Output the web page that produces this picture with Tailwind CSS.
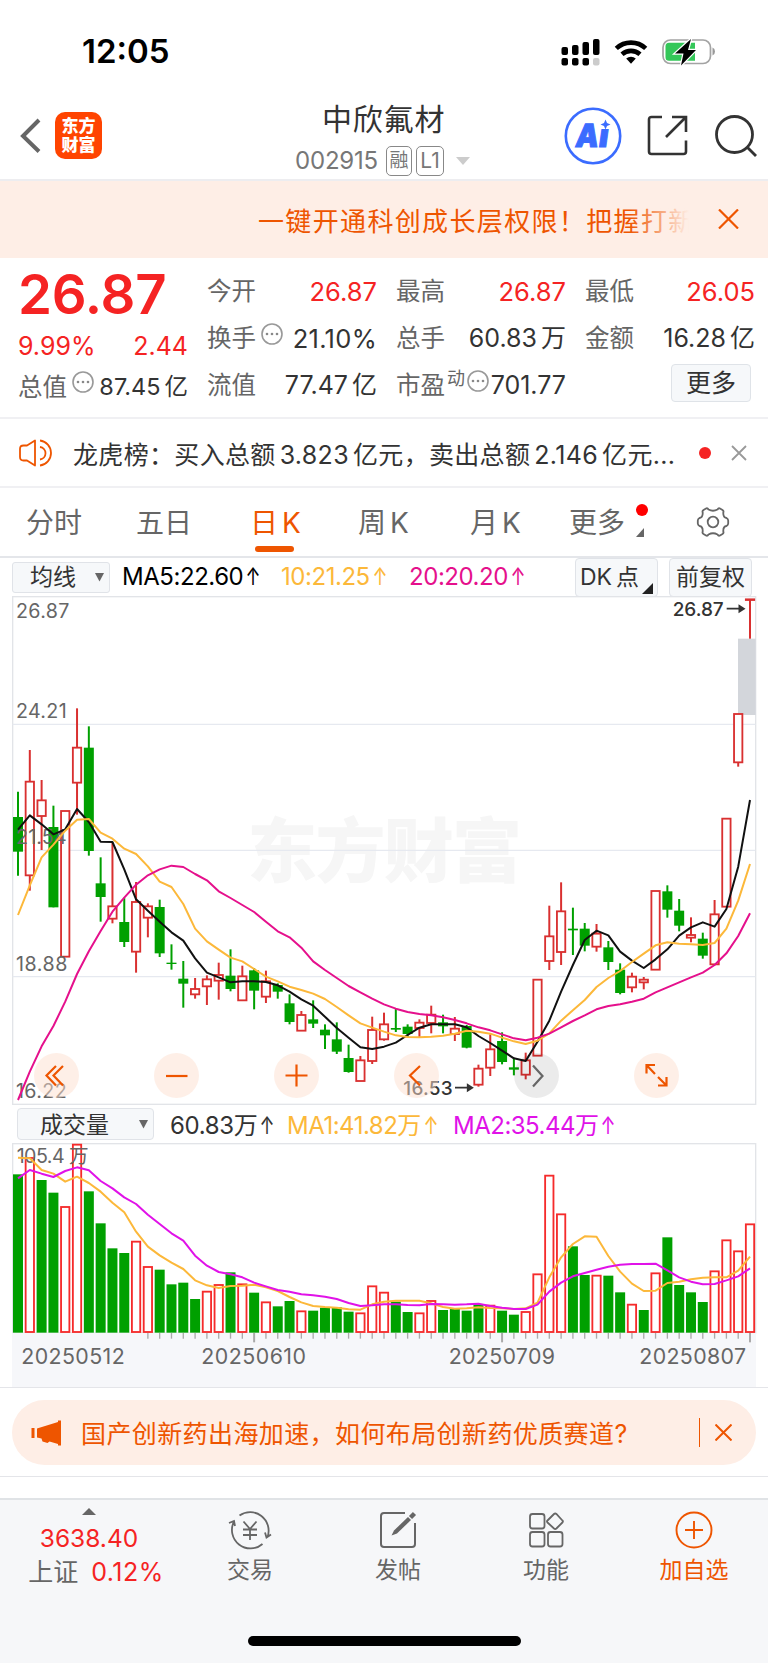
<!DOCTYPE html>
<html lang="zh-CN">
  <head>
    <meta charset="UTF-8" />
    <meta name="viewport" content="width=device-width, initial-scale=1" />
    <title>中欣氟材 002915</title>
    <script src="https://cdn.jsdelivr.net/npm/@tailwindcss/browser@4"></script>
  </head>
  <body class="bg-white">
    <div
      class="w-[768px] h-[1663px] overflow-hidden flex flex-col font-['Inter','Noto_Sans_CJK_SC',sans-serif] text-[#333] whitespace-nowrap"
    >
      <!-- Status bar -->
      <div class="h-[96px] shrink-0 flex justify-between items-center pt-[7px] pl-[82px] pr-[50px]">
        <div class="text-[33px] leading-none font-semibold text-black">12:05</div>
        <svg width="157" height="30" viewBox="0 0 157 30">
          <g fill="#000">
            <rect x="0.5" y="10" width="6.5" height="8" rx="2" />
            <rect x="11" y="8" width="6.5" height="10" rx="2" />
            <rect x="21.5" y="5" width="6.5" height="13" rx="2" />
            <rect x="32" y="2" width="6.5" height="16" rx="2" />
            <rect x="0.5" y="21" width="6.5" height="7.5" rx="2" />
            <rect x="11" y="21" width="6.5" height="7.5" rx="2" />
            <rect x="21.5" y="21" width="6.5" height="7.5" rx="2" />
            <rect x="32" y="21" width="6.5" height="7.5" rx="2" fill="#ccc" />
          </g>
          <g fill="none" stroke="#000" stroke-width="4.6">
            <path d="M55.3 11.4a21.5 21.5 0 0 1 29.4 0" />
            <path d="M61 17.3a13.6 13.6 0 0 1 18 0" />
          </g>
          <path d="M65.2 21.6a7.5 7.5 0 0 1 9.6 0l-4.800 5.100z" fill="#000" />
          <rect x="102" y="3" width="47.5" height="23.5" rx="7.5" fill="none" stroke="#a3a3a3" stroke-width="1.7" />
          <path d="M151.5 10.5q2.5 1 2.5 4t-2.5 4z" fill="#999" />
          <path d="M108 5.7h26v18h-26q-3.5 0-3.5-3.5v-11q0-3.5 3.5-3.5z" fill="#34c759" />
          <path d="M130 2l-16 14.5h8.5L120 28.5l15-15.5h-8z" fill="#000" stroke="#fff" stroke-width="2.4" paint-order="stroke" />
        </svg>
      </div>

      <!-- Title bar -->
      <div class="h-[85px] shrink-0 flex justify-between items-center pl-[20px] pr-[11px] pb-[4px] border-b-2 border-[#ededf0] relative">
        <div class="flex items-center gap-[14px]">
          <svg width="21" height="36" viewBox="0 0 21 36" fill="none" stroke="#666" stroke-width="4">
            <path d="M19 2L3 18l16 15.5" />
          </svg>
          <div
            class="w-[47px] h-[47px] rounded-[10px] bg-[#ff4400] text-white text-[17px] leading-[19px] font-black flex items-center justify-center text-center"
          >
            东方<br />财富
          </div>
        </div>
        <div class="absolute left-[295px] top-[5px] w-[176px]">
          <div class="text-[30px] leading-[36px] pl-[27px] tracking-[0.8px]">中欣氟材</div>
          <div class="flex items-center h-[30px] mt-[9px]">
            <span class="text-[24px] text-[#777] leading-none w-[91px] tracking-[-0.2px]">002915</span>
            <span class="w-[26px] h-[30px] rounded-[5px] border-[1.5px] border-[#888] text-[#777] text-[19px] leading-[28px] text-center">融</span>
            <span class="w-[28px] h-[30px] ml-[4px] rounded-[5px] border-[1.5px] border-[#888] text-[#777] text-[21px] leading-[28px] text-center">L1</span>
            <svg class="ml-[12px]" width="14" height="8" viewBox="0 0 14 8"><path d="M0 0h14L7 8z" fill="#ccc" /></svg>
          </div>
        </div>
        <div class="flex items-center">
          <svg width="58" height="58" viewBox="0 0 58 58">
            <circle cx="29" cy="29" r="27.2" fill="none" stroke="#3b6cff" stroke-width="2.6" />
            <g transform="skewX(-8)" font-size="32" font-weight="900" fill="#3b6cff" stroke="#3b6cff" stroke-width="1">
              <text x="16" y="40" textLength="23" lengthAdjust="spacingAndGlyphs">A</text>
              <text x="39.5" y="40">ı</text>
            </g>
            <path d="M41.500 12.500l1.500 3.500 3.500 1.500-3.500 1.500-1.500 3.500-1.500-3.500-3.500-1.500 3.500-1.500z" fill="#3b6cff" />
          </svg>
          <svg class="ml-[25px]" width="41" height="41" viewBox="0 0 41 41" fill="none" stroke="#333" stroke-width="2.6">
            <path d="M15 2H4.5Q2 2 2 4.5v32Q2 39 4.5 39h32q2.5 0 2.5-2.5V25.5M25 2h14v15M39 2L19 22" />
          </svg>
          <svg class="ml-[27px]" width="42" height="42" viewBox="0 0 42 42" fill="none" stroke="#333" stroke-width="2.8">
            <circle cx="19.5" cy="19.5" r="18" />
            <path d="M32 32l9 9" />
          </svg>
        </div>
      </div>

      <!-- Scrolling promo -->
      <div class="h-[77px] shrink-0 bg-[#feeee6] flex items-center pl-[258px] pr-[29px] text-[#ee5500]">
        <div class="text-[26px] tracking-[1.35px] w-[431px] mt-[3px] overflow-hidden relative">
          一键开通科创成长层权限！把握打新
          <div class="absolute right-0 inset-y-0 w-[60px] bg-linear-to-r from-[#feeee6]/0 to-[#feeee6]"></div>
        </div>
        <svg class="ml-auto mb-[1px]" width="21" height="20" viewBox="0 0 21 20" fill="none" stroke="#ee5500" stroke-width="2.2">
          <path d="M1 .5l19 19M20 .5l-19 19" />
        </svg>
      </div>

      <!-- Quote -->
      <div class="h-[161px] shrink-0 grid grid-cols-[170px_170px_170px_170px] gap-x-[19px] pl-[18px] border-b-2 border-[#f0f0f3] text-[25.5px] leading-none">
        <div>
          <div class="text-[54.5px] font-semibold text-[#f52323] h-[71px] leading-[73px] tracking-[-0.2px]">26.87</div>
          <div class="flex justify-between items-center h-[34px] text-[#f52323] text-[25px]">
            <span>9.99%</span><span>2.44</span>
          </div>
          <div class="flex justify-between items-center h-[46px] mt-[1px]">
            <span class="text-[#666] text-[24.5px]">总值</span>
            <svg class="mb-[10px]" width="22" height="22" viewBox="0 0 22 22">
              <circle cx="11" cy="11" r="10" fill="none" stroke="#999" stroke-width="1.6" />
              <g fill="#888"><circle cx="6" cy="11" r="1.3" /><circle cx="11" cy="11" r="1.3" /><circle cx="16" cy="11" r="1.3" /></g>
            </svg>
            <span class="text-[23.5px]">87.45<span class="ml-1">亿</span></span>
          </div>
        </div>
        <div class="pt-[10px]">
          <div class="flex justify-between items-center h-[47px]">
            <span class="text-[#666] text-[24.5px]">今开</span><span class="text-[#f52323]">26.87</span>
          </div>
          <div class="flex items-center h-[47px]">
            <span class="text-[#666] text-[24.5px]">换手</span>
            <svg class="mb-[10px] ml-[5px] mr-auto" width="22" height="22" viewBox="0 0 22 22">
              <circle cx="11" cy="11" r="10" fill="none" stroke="#999" stroke-width="1.6" />
              <g fill="#888"><circle cx="6" cy="11" r="1.3" /><circle cx="11" cy="11" r="1.3" /><circle cx="16" cy="11" r="1.3" /></g>
            </svg>
            <span class="tracking-[0.3px]">21.10%</span>
          </div>
          <div class="flex justify-between items-center h-[47px]">
            <span class="text-[#666] text-[24.5px]">流值</span><span class="text-[25px]">77.47<span class="ml-1">亿</span></span>
          </div>
        </div>
        <div class="pt-[10px]">
          <div class="flex justify-between items-center h-[47px]">
            <span class="text-[#666] text-[24.5px]">最高</span><span class="text-[#f52323]">26.87</span>
          </div>
          <div class="flex justify-between items-center h-[47px]">
            <span class="text-[#666] text-[24.5px]">总手</span><span class="text-[25px]">60.83<span class="ml-1">万</span></span>
          </div>
          <div class="flex justify-between items-center h-[47px]">
            <span class="text-[#666] text-[24.5px]">市盈</span>
            <span class="text-[#666] text-[18px] mb-[14px]">动</span>
            <svg class="mb-[10px]" width="22" height="22" viewBox="0 0 22 22">
              <circle cx="11" cy="11" r="10" fill="none" stroke="#999" stroke-width="1.6" />
              <g fill="#888"><circle cx="6" cy="11" r="1.3" /><circle cx="11" cy="11" r="1.3" /><circle cx="16" cy="11" r="1.3" /></g>
            </svg>
            <span class="text-[25px]">701.77</span>
          </div>
        </div>
        <div class="pt-[10px]">
          <div class="flex justify-between items-center h-[47px]">
            <span class="text-[#666] text-[24.5px]">最低</span><span class="text-[#f52323]">26.05</span>
          </div>
          <div class="flex justify-between items-center h-[47px]">
            <span class="text-[#666] text-[24.5px]">金额</span><span class="text-[25px]">16.28<span class="ml-1">亿</span></span>
          </div>
          <div class="w-[80px] h-[38px] mt-[2px] ml-[86px] rounded-[4px] border-[1.5px] border-[#dfe3e8] bg-[#f6f8fa] text-[25px] leading-[37px] text-center">更多</div>
        </div>
      </div>

      <!-- News -->
      <div class="h-[69px] shrink-0 flex items-center pl-[19px] pr-[21px] border-b-2 border-[#f0f0f3]">
        <svg width="34" height="28" viewBox="0 0 34 28" fill="none" stroke="#ee5500" stroke-width="1.8">
          <path d="M16 1.5v25L8 21.5H4.5Q1 21.5 1 18v-8q0-3.5 3.5-3.5H8z" stroke-linejoin="round" />
          <path d="M21 8a6.3 6.3 0 0 1 0 12.5M21 1.5a12.6 12.6 0 0 1 0 25" />
        </svg>
        <div class="ml-[20px] mt-[6px] text-[25px] tracking-[0.33px] w-[604px]">龙虎榜：买入总额<span class="ml-1">3.823</span><span class="ml-1">亿元，卖出总额</span><span class="ml-1">2.146</span><span class="ml-1">亿元...</span></div>
        <div class="w-[12px] h-[12px] rounded-full bg-[#f52323] ml-[22px]"></div>
        <svg class="ml-auto" width="16" height="16" viewBox="0 0 16 16" fill="none" stroke="#999" stroke-width="1.8">
          <path d="M1 1l14 14M15 1L1 15" />
        </svg>
      </div>

      <!-- Period tabs -->
      <div
        class="h-[70px] shrink-0 grid grid-cols-[110px_114px_108px_112px_99px_127px_1fr] items-center pl-[26px] border-b-2 border-[#e4e6ea] text-[28px] leading-none text-[#666]"
      >
        <span class="pt-[2px]">分时</span>
        <span class="pt-[2px]">五日</span>
        <span class="pt-[2px] text-[#ee5500] relative"
          >日<span class="ml-1">K</span>
          <span class="absolute left-[5px] top-[39px] w-[39px] h-[6px] rounded-full bg-[#ee5500]"></span>
        </span>
        <span class="pt-[2px]">周<span class="ml-1">K</span></span>
        <span class="pt-[2px]">月<span class="ml-1">K</span></span>
        <span class="pt-[2px] relative"
          >更多
          <span class="absolute left-[67px] top-[-3px] w-[12px] h-[12px] rounded-full bg-[#ff0000]"></span>
          <svg class="absolute left-[67px] top-[21px]" width="8" height="9" viewBox="0 0 8 9"><path d="M8 0v9H0z" fill="#666" /></svg>
        </span>
        <svg width="34" height="32" viewBox="-17 -16 34 32" fill="none" stroke="#666" stroke-width="1.8" stroke-linejoin="round">
          <circle r="5.3" />
          <path
            d="M-4.500-12.500Q0-10 4.500-12.500 5.500-14.300 7-13.500L9.500-12Q11-11 10.300-9.500 10-4.500 13.500-4 15.200-3 15.200-1.500V1.500Q15.200 3 13.500 4 10 4.500 10.300 9.500 11 11 9.500 12L7 13.500Q5.500 14.300 4.500 12.500 0 10-4.500 12.500-5.500 14.300-7 13.500L-9.500 12Q-11 11-10.300 9.500-10 4.500-13.500 4-15.200 3-15.200 1.500V-1.500Q-15.200-3-13.500-4-10-4.500-10.300-9.500-11-11-9.500-12L-7-13.500Q-5.500-14.300-4.500-12.500z"
          />
        </svg>
      </div>

      <!-- Moving averages -->
      <div class="h-[38px] shrink-0 flex items-center pl-[12px] text-[24px] leading-none">
        <div class="w-[98px] h-[31px] rounded-[3px] border-[1.5px] border-[#e0e3e8] bg-[#f6f8fa] flex items-center pl-[17px]">
          <span class="text-[23px] pt-[1px]">均线</span>
          <svg class="ml-[19px]" width="9" height="9" viewBox="0 0 9 9"><path d="M0 0h9L4.5 8.5z" fill="#666" /></svg>
        </div>
        <span class="ml-[12px] w-[159px] text-black tracking-[-0.45px]">MA5:22.60<span class="inline-block scale-x-75">↑</span></span>
        <span class="w-[128px] text-[#fcb83a] tracking-[-0.45px]">10:21.25<span class="inline-block scale-x-75">↑</span></span>
        <span class="w-[166px] text-[#e5108c] tracking-[-0.45px]">20:20.20<span class="inline-block scale-x-75">↑</span></span>
        <div class="w-[83px] h-[39px] rounded-[4px] border-[1.5px] border-[#e0e3e8] bg-[#f6f8fa] flex items-center pl-[4px] relative text-[23px]">
          DK<span class="ml-1">点</span>
          <svg class="absolute right-[4px] bottom-[2px]" width="11" height="11" viewBox="0 0 11 11"><path d="M11 0v11H0z" fill="#222" /></svg>
        </div>
        <div class="w-[83px] h-[39px] ml-[11px] pt-[1px] rounded-[4px] border-[1.5px] border-[#e0e3e8] bg-[#f6f8fa] flex items-center justify-center text-[23px]">前复权</div>
      </div>

      <!-- Candles: three chart units to the pixel -->
      <div class="h-[509px] shrink-0 relative">
        <svg class="block" width="768" height="509" viewBox="0 -432 2304 1527">
          <rect x="38" y="-430" width="2229" height="1523" fill="none" stroke="#e2e4e8" stroke-width="4" />
          <text x="742" y="412" font-size="210" font-weight="900" fill="#f6f6f6" textLength="824">东方财富</text>
          <path d="M38-47H2266M38 331H2266M38 710H2266" stroke="#e6e9f0" stroke-width="4" />
          <rect x="2214" y="-304" width="53" height="229" fill="#d3d6db" />
          <g id="candles"></g>
          <g fill="#666" font-size="59">
            <text x="48" y="-366" textLength="160">26.87</text>
            <text x="48" y="-67" textLength="152">24.21</text>
            <text x="48" y="312" textLength="152">21.54</text>
            <text x="48" y="692" textLength="154">18.88</text>
            <text x="48" y="1073" textLength="152">16.22</text>
          </g>
          <g id="maLines" fill="none" stroke-width="6" stroke-linejoin="round"></g>
          <g fill="#333" font-size="57" font-weight="500">
            <text x="2018" y="-373" textLength="153">26.87</text>
            <text x="1210" y="1065" textLength="148">16.53</text>
          </g>
          <g fill="#333" stroke="#333" stroke-width="5">
            <path d="M2180-394h38v-9l14 9-14 9v-9M1365 1043h38v-9l14 9-14 9v-9" />
          </g>
        </svg>
        <div class="absolute left-[34px] top-[457px] w-[645px] flex justify-between">
          <svg width="45" height="45" viewBox="0 0 45 45" fill="none" stroke="#ee5500" stroke-width="2.2">
            <circle cx="22.5" cy="22.5" r="22.5" fill="#fee0d0" fill-opacity=".5" stroke="none" />
            <path d="M22 13L12.5 22.5 22 32.5M29 13l-9.5 9.5L29 32.5" />
          </svg>
          <svg width="45" height="45" viewBox="0 0 45 45" fill="none" stroke="#ee5500" stroke-width="2.2">
            <circle cx="22.5" cy="22.5" r="22.5" fill="#fee0d0" fill-opacity=".5" stroke="none" />
            <path d="M12 23h21.5" />
          </svg>
          <svg width="45" height="45" viewBox="0 0 45 45" fill="none" stroke="#ee5500" stroke-width="2.2">
            <circle cx="22.5" cy="22.5" r="22.5" fill="#fee0d0" fill-opacity=".5" stroke="none" />
            <path d="M11.5 22.5h22M22.5 11.5v22" />
          </svg>
          <svg width="45" height="45" viewBox="0 0 45 45" fill="none" stroke="#ee5500" stroke-width="2.2">
            <circle cx="22.5" cy="22.5" r="22.5" fill="#fee0d0" fill-opacity=".5" stroke="none" />
            <path d="M26 13L16 22.5 26 32.5" />
          </svg>
          <svg width="45" height="45" viewBox="0 0 45 45" fill="none" stroke="#666" stroke-width="2.2">
            <circle cx="22.5" cy="22.5" r="22.5" fill="#000" fill-opacity=".08" stroke="none" />
            <path d="M19 12.5l9.5 10.5L19 33.5" />
          </svg>
          <svg width="45" height="45" viewBox="0 0 45 45" fill="none" stroke="#ee5500" stroke-width="2.2">
            <circle cx="22.5" cy="22.5" r="22.5" fill="#fee0d0" fill-opacity=".5" stroke="none" />
            <path d="M21 12h-8.5v8.5M12.5 12l8.5 9M24 24l8.5 8.5M24 32.5h8.5V24" />
          </svg>
        </div>
      </div>

      <!-- Volume header -->
      <div class="h-[38px] shrink-0 flex items-center pl-[17px] text-[24px] leading-none">
        <div class="w-[137px] h-[32px] rounded-[4px] border-[1.5px] border-[#e0e3e8] bg-[#f6f8fa] flex items-center pl-[22px]">
          <span class="text-[23px] pt-[2px]">成交量</span>
          <svg class="ml-[30px]" width="9" height="9" viewBox="0 0 9 9"><path d="M0 0h9L4.5 8.5z" fill="#666" /></svg>
        </div>
        <span class="ml-[16px] w-[117px] pt-[3px] tracking-[-0.35px]">60.83万<span class="inline-block scale-x-75">↑</span></span>
        <span class="w-[166px] pt-[3px] text-[#fcb83a] tracking-[-0.5px]">MA1:41.82万<span class="inline-block scale-x-75">↑</span></span>
        <span class="pt-[3px] text-[#e012e8] tracking-[-0.5px]">MA2:35.44万<span class="inline-block scale-x-75">↑</span></span>
      </div>

      <!-- Volume bars and dates -->
      <svg class="block shrink-0" width="768" height="244" viewBox="0 129 2304 732">
        <rect x="38" y="131" width="2229" height="568" fill="none" stroke="#e2e4e8" stroke-width="4" />
        <rect x="36" y="699" width="2232" height="162" fill="#f6f7fa" />
        <g id="volume"></g>
        <text x="50" y="190" font-size="59" fill="#666" textLength="216">105.4 万</text>
        <g id="volumeLines" fill="none" stroke-width="6" stroke-linejoin="round"></g>
        <g fill="#666" font-size="64">
          <text x="64" y="792" textLength="310">20250512</text>
          <text x="604" y="792" textLength="314">20250610</text>
          <text x="1346" y="792" textLength="319">20250709</text>
          <text x="1918" y="792" textLength="320">20250807</text>
        </g>
      </svg>

      <!-- Topic -->
      <div class="h-[90px] shrink-0 border-y-[1.5px] border-[#e4e5e9] flex items-center px-[12px]">
        <div class="h-[65px] w-[744px] mt-[1px] rounded-full bg-[#feeee6] text-[#ee5500] flex items-center pl-[19px] pr-[24px]">
          <svg width="30" height="26" viewBox="0 0 30 26" fill="#ee5500">
            <path d="M.5 8h3v10h-3zM6 8.5L27 2V.5h3v25h-3V24l-8.5-2.5-2 1.500-5-1.500-1-3L6 17.500z" />
          </svg>
          <span class="ml-[20px] mt-[5px] text-[25px] tracking-[0.4px]">国产创新药出海加速，如何布局创新药优质赛道?</span>
          <span class="ml-auto w-[1.5px] h-[29px] bg-[#ee5500]"></span>
          <svg class="ml-[15px]" width="17" height="17" viewBox="0 0 17 17" fill="none" stroke="#ee5500" stroke-width="2">
            <path d="M.5.5l16 16M16.5.5l-16 16" />
          </svg>
        </div>
      </div>
      <div class="h-[21px] shrink-0"></div>

      <!-- Bottom bar -->
      <div class="grow bg-[#f6f7f9] border-t-2 border-[#e0e3e6] flex flex-col text-[#666]">
        <div class="grid grid-cols-[176px_148px_148px_148px_148px] text-[23px] leading-none text-center">
          <div class="flex flex-col items-center pt-[8px] pl-[2px]">
            <svg width="14" height="7" viewBox="0 0 14 7"><path d="M7 0l7 7H0z" fill="#666" /></svg>
            <div class="mt-[11px] text-[24.5px] text-[#f52323]">3638.40</div>
            <div class="mt-[9px] text-[25px] pl-[14px]">上证<span class="ml-[13px] text-[#f52323] tracking-[0.5px]">0.12%</span></div>
          </div>
          <div class="flex flex-col items-center gap-[9px] pt-[10px]">
            <svg width="44" height="40" viewBox="0 0 44 40" fill="none" stroke="#666" stroke-width="1.8">
              <path d="M11.5 5.5A18.5 18.5 0 0 1 39.5 27M43 24.5l-4.5 3-1.5-5M34.5 34A18.5 18.5 0 0 1 6 11.5M1 13l5-2 1 5" />
              <path d="M15.5 11.5l6.5 7.5 6.5-7.5M22 19v11M15 19.5h14M15 25h14" />
            </svg>
            <span>交易</span>
          </div>
          <div class="flex flex-col items-center gap-[9px] pt-[10px]">
            <svg width="38" height="40" viewBox="0 0 38 40" fill="none" stroke="#666" stroke-width="2">
              <path d="M26 3H5Q2 3 2 6v28q0 3 3 3h28q3 0 3-3V13" />
              <path d="M12.5 25.5l2.5-5L29 7l3 3-14 13.5z" fill="#666" stroke="none" />
              <path d="M31.5 7.5l4-4" stroke-width="4.5" />
            </svg>
            <span>发帖</span>
          </div>
          <div class="flex flex-col items-center gap-[9px] pt-[10px]">
            <svg width="36" height="40" viewBox="0 0 36 40" fill="none" stroke="#666" stroke-width="1.8">
              <rect x="2" y="4" width="14.5" height="14.5" rx="2.5" />
              <rect x="2" y="22" width="14.5" height="14.5" rx="2.5" />
              <rect x="20" y="22" width="14.5" height="14.5" rx="2.5" />
              <path d="M26 4l-6.5 6.5q-1 1 0 2L26 18.5q1.200 1 2.400 0l6-6q1-1 0-2L28.400 4q-1.200-1-2.400 0z" />
            </svg>
            <span>功能</span>
          </div>
          <div class="flex flex-col items-center gap-[9px] pt-[10px] text-[#ee5500]">
            <svg width="38" height="40" viewBox="0 0 38 40" fill="none" stroke="#ee5500" stroke-width="1.9">
              <circle cx="19" cy="20" r="17.5" />
              <path d="M10 20h18M19 11v18" />
            </svg>
            <span>加自选</span>
          </div>
        </div>
        <div class="w-[273px] h-[10px] mx-auto mt-auto mb-[17px] rounded-full bg-black"></div>
      </div>
    </div>

    <script>
      // side, high, body top, body bottom, low
      const candles = [
        ["g", 155, 231, 335, 407], ["r", 30, 125, 406, 452], ["r", 120, 181, 228, 330], ["g", 197, 261, 502, 502],
        ["r", 213, 213, 650, 650], ["r", -95, 23, 128, 224], ["g", -41, 23, 333, 347], ["g", 352, 430, 471, 545],
        ["r", 308, 499, 536, 550], ["g", 473, 546, 606, 621], ["r", 426, 486, 635, 698], ["r", 490, 499, 533, 592],
        ["g", 479, 501, 640, 651], ["g", 613, 668, 672, 689], ["g", 663, 716, 731, 803], ["r", 714, 747, 763, 776],
        ["r", 706, 718, 739, 795], ["r", 668, 705, 722, 779], ["g", 628, 707, 747, 754], ["r", 677, 709, 781, 781],
        ["g", 684, 691, 752, 808], ["r", 692, 724, 770, 789], ["g", 730, 735, 755, 776], ["g", 763, 790, 846, 853],
        ["r", 813, 825, 872, 872], ["g", 781, 838, 851, 864], ["g", 853, 869, 886, 927], ["g", 847, 898, 935, 942],
        ["g", 914, 954, 996, 998], ["r", 948, 961, 1023, 1023], ["r", 830, 870, 963, 972], ["r", 818, 853, 898, 902],
        ["g", 805, 864, 869, 876], ["g", 853, 860, 882, 892], ["r", 838, 848, 864, 893], ["r", 797, 824, 849, 880],
        ["g", 824, 847, 859, 880], ["r", 831, 866, 882, 903], ["g", 855, 858, 923, 925], ["r", 974, 986, 1034, 1040],
        ["r", 883, 928, 983, 1008], ["g", 877, 903, 966, 973], ["g", 957, 982, 989, 1006], ["r", 938, 961, 1004, 1018],
        ["r", 719, 719, 947, 947], ["r", 497, 589, 663, 690], ["r", 427, 514, 636, 675], ["g", 503, 566, 571, 645],
        ["g", 549, 566, 617, 634], ["r", 552, 581, 620, 635], ["g", 603, 622, 666, 690], ["g", 670, 689, 759, 763],
        ["r", 698, 710, 742, 757], ["r", 711, 719, 727, 748], ["r", 453, 453, 689, 689], ["g", 436, 454, 509, 533],
        ["g", 477, 512, 557, 574], ["r", 532, 585, 593, 607], ["g", 578, 596, 647, 656], ["r", 480, 523, 673, 673],
        ["r", 236, 236, 500, 500], ["r", -78, -78, 67, 80], ["r", -422, -422, -420, -304],
      ];
      const ma5 = [269, 226, 253, 283, 268, 207, 246, 305, 306, 388, 478, 512, 545, 577, 602, 655, 698, 712, 727, 724, 724, 726, 736, 755, 778, 797, 830, 864, 893, 922, 927, 920, 908, 885, 863, 853, 853, 853, 862, 888, 909, 932, 955, 963, 905, 842, 755, 675, 600, 572, 586, 635, 662, 684, 658, 628, 587, 562, 547, 560, 507, 380, 180];
      const ma10 = [525, 436, 352, 314, 272, 239, 237, 278, 296, 326, 342, 379, 425, 441, 492, 566, 604, 629, 653, 664, 687, 710, 724, 740, 750, 761, 777, 801, 826, 850, 863, 875, 886, 891, 892, 890, 887, 881, 872, 875, 881, 893, 904, 912, 902, 880, 842, 811, 780, 741, 714, 693, 666, 641, 616, 607, 611, 613, 615, 609, 566, 482, 372];
      const ma20 = [1080, 995, 919, 858, 785, 702, 634, 573, 515, 473, 434, 406, 388, 377, 381, 402, 421, 454, 474, 495, 516, 545, 574, 592, 623, 664, 690, 714, 738, 757, 776, 793, 806, 816, 822, 826, 832, 840, 850, 862, 871, 883, 895, 901, 893, 881, 862, 843, 826, 808, 798, 793, 785, 776, 757, 742, 727, 712, 698, 675, 640, 588, 520];
      const volume = [223, 172, 240, 278, 319, 132, 274, 370, 445, 459, 423, 499, 509, 553, 548, 597, 573, 553, 517, 551, 578, 605, 619, 603, 632, 632, 623, 622, 635, 638, 557, 576, 605, 636, 638, 601, 630, 627, 632, 615, 615, 632, 644, 634, 521, 225, 341, 439, 525, 525, 527, 577, 612, 630, 518, 412, 555, 577, 606, 512, 419, 452, 371];
      const volMa1 = [173, 175, 210, 221, 245, 230, 249, 275, 308, 337, 395, 440, 466, 488, 507, 541, 556, 564, 558, 557, 554, 562, 573, 591, 607, 618, 621, 623, 628, 629, 613, 605, 602, 602, 602, 610, 621, 626, 625, 622, 624, 625, 627, 625, 608, 532, 472, 432, 409, 410, 468, 515, 551, 573, 572, 549, 545, 538, 533, 532, 532, 512, 470];
      const volMa2 = [235, 210, 221, 231, 213, 202, 211, 243, 265, 292, 312, 344, 372, 400, 422, 467, 497, 516, 523, 532, 548, 559, 570, 575, 583, 586, 590, 597, 609, 618, 616, 613, 613, 615, 616, 612, 613, 614, 613, 611, 618, 623, 627, 627, 614, 575, 548, 529, 519, 509, 500, 494, 492, 492, 491, 511, 532, 545, 553, 552, 541, 529, 505];

      // days that closed over their open but under the previous close
      const fallingDays = [2, 8, 15, 37, 39, 53, 57];

      const UP = "#d93030";
      const UP_VOL = "#f52b2b";
      const DOWN = "#00a000";
      const xAt = (i) => 54 + i * 35.42;

      function line(values, color) {
        const points = values.map((y, i) => `${xAt(i)},${y}`).join(" ");
        return `<polyline points="${points}" stroke="${color}" />`;
      }

      function bar(x, top, bottom, up, color) {
        if (!up) {
          return `<rect x="${x - 15}" y="${top}" width="30" height="${bottom - top}" fill="${color}" />`;
        }
        return `<rect x="${x - 12.5}" y="${top}" width="25" height="${bottom - top}" fill="#fff" stroke="${color}" stroke-width="5.5" />`;
      }

      document.getElementById("candles").innerHTML = candles
        .map(([side, high, top, bottom, low], i) => {
          const x = xAt(i);
          const up = side === "r";
          const color = up ? UP : DOWN;
          return `<path d="M${x} ${high}V${low}" stroke="${color}" stroke-width="6" />` + bar(x, top, bottom, up, color);
        })
        .join("");

      document.getElementById("maLines").innerHTML =
        line(ma5, "#111") + line(ma10, "#fcb83a") + line(ma20, "#e5108c");

      document.getElementById("volume").innerHTML = volume
        .map((top, i) => {
          const up = candles[i][0] === "r" && !fallingDays.includes(i);
          const x = xAt(i);
          // month marks are longer
          const major = i === 20 || i === 41 || i === 62;
          const tick = i > 10 ? `<path d="M${x} 699V${major ? 727 : 716}" stroke="#aaa" stroke-width="${major ? 6 : 4}" />` : "";
          return tick + (up ? bar(x, top + 2, 696, up, UP_VOL) : bar(x, top, 698, up, DOWN));
        })
        .join("");

      document.getElementById("volumeLines").innerHTML = line(volMa1, "#fcb83a") + line(volMa2, "#e012e8");
    </script>
  </body>
</html>
